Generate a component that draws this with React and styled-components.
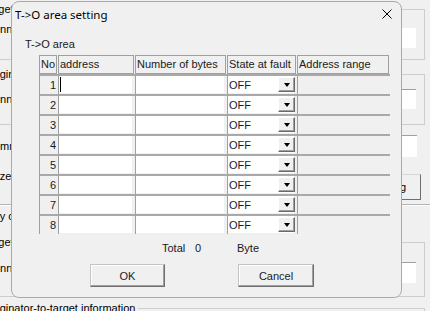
import React from 'react'
import styled, { createGlobalStyle } from 'styled-components'

const GlobalStyle = createGlobalStyle`
  html, body {
    margin: 0;
    padding: 0;
    background: #f0f0f0;
  }
  body {
    font-family: "Liberation Sans", Arial, sans-serif;
    font-size: 11px;
    color: #000;
  }
  * {
    box-sizing: border-box;
  }
`

const Screen = styled.div`
  position: relative;
  width: 430px;
  height: 311px;
  overflow: hidden;
  background: #f0f0f0;
`

/* ---------- window behind the dialog ---------- */

const Form = styled.div`
  display: flex;
  flex-direction: column;
  width: 430px;
`

const GroupBox = styled.div`
  position: relative;
  flex: none;
  height: ${p => p.$height}px;
  margin: ${p => p.$top}px 5px 0 -40px;
  padding: 0 8px 0 39px;
  border: 1px solid #cdcdcd;
  border-bottom-color: ${p => (p.$open ? 'transparent' : '#cdcdcd')};
`

const Legend = styled.span`
  position: absolute;
  top: -7px;
  left: ${p => 39 + p.$shift}px;
  padding-right: 3px;
  line-height: 13px;
  background: #f0f0f0;
  white-space: nowrap;
`

const Row = styled.div`
  display: flex;
  flex: none;
  align-items: center;
  justify-content: space-between;
  height: ${p => p.$height}px;
  margin-top: ${p => p.$top}px;
  padding-right: ${p => p.$right || 0}px;
`

const Label = styled.span`
  margin-left: ${p => p.$shift}px;
  margin-bottom: ${p => p.$lift || 0}px;
  line-height: 13px;
  white-space: nowrap;
`

const Field = styled.div`
  width: 60px;
  height: 100%;
  background: #fff;
  border-top: 1px solid ${p => (p.$plain ? '#fff' : '#a0a0a0')};
`

const FormButton = styled.div`
  width: 64px;
  height: 100%;
  display: flex;
  align-items: center;
  justify-content: center;
  background: #f0f0f0;
  border: 1px solid;
  border-color: #d8d8d8 #6e6e6e #6e6e6e #d8d8d8;
`

const Separator = styled.div`
  flex: none;
  height: 2px;
  margin-top: 4px;
  border-top: 1px solid #b4b4b4;
  border-bottom: 1px solid #fff;
`

/* ---------- dialog ---------- */

const Dialog = styled.div`
  position: absolute;
  left: 11px;
  top: 1px;
  width: 391px;
  height: 297px;
  display: flex;
  flex-direction: column;
  background: #f0f0f0;
  border: 1px solid #a9a9a9;
  border-radius: 8px;
`

const TitleBar = styled.div`
  display: flex;
  align-items: center;
  justify-content: space-between;
  height: 25px;
  padding: 0 9px 0 3px;
`

const Title = styled.span`
  font-family: "Noto Sans", "Open Sans", sans-serif;
  font-size: 11.5px;
  color: #000;
`

const Body = styled.div`
  display: flex;
  flex-direction: column;
  padding-top: 11px;
`

const AreaLabel = styled.div`
  margin-left: 13px;
  line-height: 13px;
  color: #1a1a1a;
`

const Grid = styled.div`
  display: grid;
  grid-template-columns: 19px 77px 92px 70px 93px;
  grid-template-rows: 19px repeat(8, 20px);
  width: 351px;
  margin: 4px 0 0 27px;
`

const HeadCell = styled.div`
  margin-right: 1px;
  padding-left: 1px;
  border: 1px solid #a0a0a0;
  line-height: 17px;
  white-space: nowrap;
  overflow: hidden;
  color: #1a1a1a;
`

const Cell = styled.div`
  display: flex;
  padding: 0 3px 1px 0;
  border-top: 2px solid #a9a9a9;
  border-left: 1px solid #a0a0a0;
`

const NoCell = styled(Cell)`
  align-items: center;
  justify-content: flex-end;
  padding-right: 2px;
  color: #1a1a1a;
`

const Edit = styled.div`
  flex: 1;
  display: flex;
  align-items: center;
  padding-left: 1px;
  background: ${p => (p.$disabled ? 'transparent' : '#fff')};
  color: #1a1a1a;
`

const Caret = styled.span`
  width: 1px;
  height: 15px;
  background: #000;
`

const DropButton = styled.div`
  display: flex;
  align-items: center;
  justify-content: center;
  width: 17px;
  height: 15px;
  margin-left: auto;
  margin-right: -1px;
  background: #f0f0f0;
  border: 1px solid;
  border-color: #fff #696969 #696969 #fff;
  box-shadow: inset -1px -1px #a0a0a0;
`

const Arrow = styled.span`
  width: 0;
  height: 0;
  border-left: 3.5px solid transparent;
  border-right: 3.5px solid transparent;
  border-top: 4px solid #000;
`

const TotalRow = styled.div`
  display: flex;
  margin: 8px 0 0 150px;
  line-height: 13px;
  color: #1a1a1a;
`

const TotalPart = styled.span`
  width: ${p => p.$width}px;
`

const ButtonRow = styled.div`
  display: flex;
  gap: 73px;
  margin: 9px 0 0 78px;
`

const DialogButton = styled.div`
  display: flex;
  align-items: center;
  justify-content: center;
  width: ${p => p.$width}px;
  height: 23px;
  background: #f0f0f0;
  border: 1px solid;
  border-color: #c4c4c4 #6e6e6e #6e6e6e #c4c4c4;
  box-shadow: inset -1px -1px #a0a0a0, inset 1px 1px #fff;
  color: #1a1a1a;
`

const headers = ['No', 'address', 'Number of bytes', 'State at fault', 'Address range']
const rows = [1, 2, 3, 4, 5, 6, 7, 8]

const CloseIcon = () => (
  <svg width="10" height="10" viewBox="0 0 10 10" style={{ marginBottom: 2 }}>
    <path d="M0.5 0.5 L9.5 9.5 M9.5 0.5 L0.5 9.5" stroke="#000" strokeWidth="1" />
  </svg>
)

const App = () => {
  return (
    <Screen>
      <GlobalStyle />
      <Form>
        <GroupBox $top={9} $height={51}>
          <Legend $shift={-17}>Target device</Legend>
          <Row $top={18} $height={20}>
            <Label $shift={-14} $lift={18}>Connection</Label>
            <Field $plain />
          </Row>
        </GroupBox>
        <GroupBox $top={14} $height={51}>
          <Legend $shift={-15}>Originating device</Legend>
          <Row $top={14} $height={20}>
            <Label $shift={-14}>Connection</Label>
            <Field />
          </Row>
        </GroupBox>
        <Row $top={10} $height={22} $right={13}>
          <Label $shift={-14}>Communication</Label>
          <Field />
        </Row>
        <Row $top={17} $height={26} $right={9}>
          <Label $shift={-10} $lift={22}>Size</Label>
          <FormButton>Setting</FormButton>
        </Row>
        <Separator />
        <Row $top={4} $height={13}>
          <Label $shift={-29}>Priority connection</Label>
        </Row>
        <GroupBox $top={19} $height={55}>
          <Legend $shift={-17}>Target device</Legend>
          <Row $top={19} $height={21}>
            <Label $shift={-14} $lift={8}>Connection</Label>
            <Field />
          </Row>
        </GroupBox>
        <GroupBox $top={11} $height={30} $open>
          <Legend $shift={-15}>Originator-to-target information</Legend>
        </GroupBox>
      </Form>

      <Dialog>
        <TitleBar>
          <Title>T-&gt;O area setting</Title>
          <CloseIcon />
        </TitleBar>
        <Body>
          <AreaLabel>T-&gt;O area</AreaLabel>
          <Grid>
            {headers.map(h => (
              <HeadCell key={h}>{h}</HeadCell>
            ))}
            {rows.map(n => (
              <React.Fragment key={n}>
                <NoCell>{n}</NoCell>
                <Cell>
                  <Edit>{n === 1 && <Caret />}</Edit>
                </Cell>
                <Cell>
                  <Edit />
                </Cell>
                <Cell>
                  <Edit>
                    OFF
                    <DropButton>
                      <Arrow />
                    </DropButton>
                  </Edit>
                </Cell>
                <Cell>
                  <Edit $disabled />
                </Cell>
              </React.Fragment>
            ))}
          </Grid>
          <TotalRow>
            <TotalPart $width={33}>Total</TotalPart>
            <TotalPart $width={42}>0</TotalPart>
            <TotalPart>Byte</TotalPart>
          </TotalRow>
          <ButtonRow>
            <DialogButton $width={75}>OK</DialogButton>
            <DialogButton $width={76}>Cancel</DialogButton>
          </ButtonRow>
        </Body>
      </Dialog>
    </Screen>
  )
}

export default App
